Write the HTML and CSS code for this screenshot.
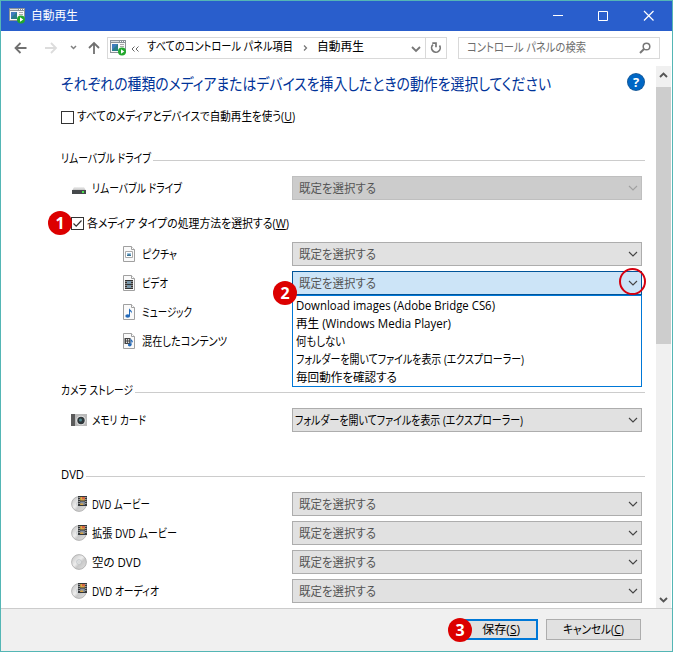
FILE: index.html
```html
<!DOCTYPE html>
<html lang="ja">
<head>
<meta charset="utf-8">
<title>自動再生</title>
<link rel="stylesheet" href="styles.css">
</head>
<body>
<svg class="defs" width="0" height="0">
  <defs>
    <linearGradient id="silver" x1="0" y1="0" x2="1" y2="1"><stop offset="0" stop-color="#bfbfbf"/><stop offset=".45" stop-color="#eeeeee"/><stop offset=".6" stop-color="#c9c9c9"/><stop offset="1" stop-color="#e2e2e2"/></linearGradient>
    <linearGradient id="drive" x1="0" y1="0" x2="0" y2="1"><stop offset="0" stop-color="#f1f1f1"/><stop offset="1" stop-color="#b5b5b5"/></linearGradient>
    <symbol id="app" viewBox="0 0 16 16">
      <path d="M0 0h16v13H0z" fill="#8b9298"/><path d="M1 3h14v9H1z" fill="#f8f8f8"/>
      <path d="M1 1h8v1H1z" fill="#d9dde0"/><path d="M10 1h1v1h-1zM12 1h1v1h-1zM14 1h1v1h-1z" fill="#fff"/>
      <path d="M2 4h6v7H2z" fill="#287d88"/><path d="M2 4h6L2 10z" fill="#407dbd"/><path d="M10 4h4v1h-4zM10 6h4v1h-4z" fill="#aaa"/>
      <circle cx="12" cy="11.500" r="4" fill="#22a82d"/><path d="M11 9.200v4.600l3.300-2.300z" fill="#fff"/>
    </symbol>
    <symbol id="page" viewBox="0 0 12 16"><path d="M.5.5h8l3 3v12H.5z" fill="#fafafa" stroke="#a0a0a0"/><path d="M8.500.5v3h3" fill="#fff" stroke="#a0a0a0"/></symbol>
    <symbol id="disc" viewBox="0 0 16 16"><circle cx="8" cy="8" r="7.400" fill="url(#silver)" stroke="#a9a9a9" stroke-width=".8"/><circle cx="8" cy="8" r="2.400" fill="#e7eaeb" stroke="#b8bcbe" stroke-width=".7"/><circle cx="8" cy="8" r=".9" fill="#fff" stroke="#aaa" stroke-width=".4"/></symbol>
    <symbol id="film" viewBox="0 0 9 10"><path d="M0 0h9v10H0z" fill="#35383a"/><path d="M2.200 1h4.600v3.500H2.200z" fill="#dcab42"/><path d="M4 1h2.800v2.200H4z" fill="#d46147"/><path d="M2.200 5.500h4.600V9H2.200z" fill="#8791a0"/><path d="M2.200 7.500h3V9h-3z" fill="#d8a441"/><path d="M.6 1h1v1h-1zM.6 3h1v1h-1zM.6 5h1v1h-1zM.6 7h1v1h-1zM7.400 1h1v1h-1zM7.400 3h1v1h-1zM7.400 5h1v1h-1zM7.400 7h1v1h-1z" fill="#ddd"/></symbol>
    <symbol id="movie" viewBox="0 0 16 16"><use href="#disc" width="16" height="16"/><use href="#film" x="7" y="0" width="9" height="10"/></symbol>
    <symbol id="chev" viewBox="0 0 10 6"><path d="M1 1l4 4 4-4" fill="none" stroke="currentColor" stroke-width="1.100"/></symbol>
  </defs>
</svg>
<div class="window">
  <header class="titlebar">
    <svg class="i16"><use href="#app"/></svg>
    <span class="caption" data-w="47">自動再生</span>
    <svg class="winbtns" width="105" height="12" viewBox="0 0 105 12" fill="none" stroke="#fff"><path d="M1 5.500h10M46.500 1.500h9v9h-9z"/><path d="M92 1l9.500 9.500M101.500 1L92 10.500" stroke-width="1.200"/></svg>
  </header>
  <nav class="nav">
    <svg class="arrows" width="90" height="14" viewBox="0 0 90 14" fill="none" stroke-width="1.800">
      <path d="M12.500 7H2M6.500 2L1.500 7l5 5" stroke="#707070"/>
      <path d="M31 7h10.500M37 2l5 5-5 5" stroke="#dcdcdc"/>
      <path d="M57 5l2.500 2.500L62 5" stroke="#808080" stroke-width="1.500"/>
      <path d="M80 13V2M75 7l5-5 5 5" stroke="#707070"/>
    </svg>
    <div class="address">
      <svg class="i16"><use href="#app"/></svg>
      <svg class="dbl" width="8" height="6" viewBox="0 0 8 6" fill="none" stroke="#666"><path d="M3.500.500L1 3l2.500 2.500M7.500.500L5 3l2.500 2.500"/></svg>
      <span class="crumb" data-w="146">すべてのコントロール パネル項目</span>
      <svg class="sep" width="5" height="8" viewBox="0 0 5 8" fill="none" stroke="#777" stroke-width="1.300"><path d="M1 1.500L3.500 4 1 6.500"/></svg>
      <span data-w="47">自動再生</span>
      <svg class="drop" width="10" height="7" viewBox="0 0 10 7" fill="none" stroke="#777" stroke-width="1.800"><path d="M1 1l4 4 4-4"/></svg>
      <span class="refresh"><svg width="12" height="12" viewBox="0 0 12 12" fill="none" stroke="#777" stroke-width="1.700"><path d="M3 2.700A4.300 4.300 0 1 0 9.500 3.500"/><path d="M2.300 1.200H6v4"/></svg></span>
    </div>
    <div class="search">
      <span data-w="119">コントロール パネルの検索</span>
      <svg width="12" height="12" viewBox="0 0 12 12" fill="none" stroke="#777" stroke-width="1.500"><circle cx="7.500" cy="4.500" r="3.300"/><path d="M5 7L1 11" stroke-width="2"/></svg>
    </div>
  </nav>
  <div class="body">
    <main>
      <div class="headline"><h1 data-w="490">それぞれの種類のメディアまたはデバイスを挿入したときの動作を選択してください</h1>
        <span class="help">?</span></div>
      <label class="check all"><i class="box"></i><span data-w="218">すべてのメディアとデバイスで自動再生を使う(<u>U</u>)</span></label>

      <section class="removable">
        <h2><span data-w="90">リムーバブル ドライブ</span></h2>
        <div class="row"><svg class="i16" viewBox="0 0 16 16"><path d="M3 7h10l2 4H1z" fill="url(#drive)"/><path d="M1 10h14v4H1z" fill="#45494b"/><path d="M11 11h2v2h-2z" fill="#4be34d"/></svg><span data-w="90">リムーバブル ドライブ</span>
          <div class="select disabled"><span data-w="77">既定を選択する</span><svg class="chev"><use href="#chev"/></svg></div></div>
        <label class="check each"><b class="badge one">1</b><i class="box"><svg width="11" height="11" viewBox="0 0 11 11" fill="none" stroke="#333" stroke-width="1.200"><path d="M1.500 5.500l2.700 2.700L9.500 2.500"/></svg></i><span data-w="202">各メディア タイプの処理方法を選択する(<u>W</u>)</span></label>
        <div class="media">
          <div class="row"><svg class="pg" viewBox="0 0 12 16"><use href="#page"/><path d="M2.500 5.500h7v6h-7z" fill="#fff" stroke="#aaa"/><path d="M4 7h4v3H4z" fill="#9fc4e2"/><path d="M4 9l2-1 2 1v1H4z" fill="#397292"/></svg><span data-w="35">ピクチャ</span>
            <div class="select"><span data-w="77">既定を選択する</span><svg class="chev"><use href="#chev"/></svg></div></div>
          <div class="row"><svg class="pg" viewBox="0 0 12 16"><use href="#page"/><path d="M2 5h8v9H2z" fill="#333"/><path d="M4 6h4v3H4zM4 10h4v3H4z" fill="#7796a9"/><path d="M2.500 6h1v1h-1zM2.500 8h1v1h-1zM2.500 10h1v1h-1zM2.500 12h1v1h-1zM8.500 6h1v1h-1zM8.500 8h1v1h-1zM8.500 10h1v1h-1zM8.500 12h1v1h-1z" fill="#ddd"/></svg><span data-w="26">ビデオ</span>
            <div class="select active"><b class="badge two">2</b><span data-w="77">既定を選択する</span><svg class="chev"><use href="#chev"/></svg><i class="ring"></i>
              <ul class="popup">
                <li><span data-w="199">Download images (Adobe Bridge CS6)</span></li>
                <li><span data-w="155">再生 (Windows Media Player)</span></li>
                <li><span data-w="49">何もしない</span></li>
                <li><span data-w="228">フォルダーを開いてファイルを表示 (エクスプローラー)</span></li>
                <li><span data-w="101">毎回動作を確認する</span></li>
              </ul></div></div>
          <div class="row"><svg class="pg" viewBox="0 0 12 16"><use href="#page"/><ellipse cx="4.700" cy="12" rx="2.400" ry="1.800" fill="#2369b8"/><path d="M6 12V4c.5 2 3.500 2 3 5.500C8.500 8 7.500 7.500 7 7.500V12z" fill="#2369b8"/></svg><span data-w="50">ミュージック</span></div>
          <div class="row"><svg class="pg" viewBox="0 0 12 16"><use href="#page"/><path d="M1.500 5h6v6h-6z" fill="#444"/><path d="M3 6h1.200v1.500H3zM5 6h1.200v1.500H5zM3 8.500h1.200V10H3zM5 8.500h1.200V10H5z" fill="#ddd"/><ellipse cx="6.700" cy="12" rx="1.800" ry="1.400" fill="#2369b8"/><path d="M7.500 12V5c.5 2 3 2 2.500 5-.5-1.300-1-1.500-1.500-1.500V12z" fill="#2369b8"/></svg><span data-w="85">混在したコンテンツ</span></div>
        </div>
      </section>

      <section class="camera">
        <h2><span data-w="72">カメラ ストレージ</span></h2>
        <div class="row"><svg class="i16" viewBox="0 0 16 16"><path d="M0 2h16v12H0z" fill="#b9b9b9"/><path d="M0 2h4v12H0z" fill="#5b5b5b"/><circle cx="10" cy="8.500" r="4.800" fill="#e3e3e3"/><circle cx="10" cy="8.500" r="3.700" fill="#30383b"/><circle cx="9.500" cy="8" r="1.500" fill="#4e8a92"/></svg><span data-w="54">メモリ カード</span>
          <div class="select chosen"><span data-w="228">フォルダーを開いてファイルを表示 (エクスプローラー)</span><svg class="chev"><use href="#chev"/></svg></div></div>
      </section>

      <section class="dvd">
        <h2><span data-w="23">DVD</span></h2>
        <div class="row"><svg class="i16"><use href="#movie"/></svg><span data-w="58">DVD ムービー</span><div class="select"><span data-w="77">既定を選択する</span><svg class="chev"><use href="#chev"/></svg></div></div>
        <div class="row"><svg class="i16"><use href="#movie"/></svg><span data-w="85">拡張 DVD ムービー</span><div class="select"><span data-w="77">既定を選択する</span><svg class="chev"><use href="#chev"/></svg></div></div>
        <div class="row"><svg class="i16"><use href="#disc"/></svg><span data-w="49">空の DVD</span><div class="select"><span data-w="77">既定を選択する</span><svg class="chev"><use href="#chev"/></svg></div></div>
        <div class="row"><svg class="i16"><use href="#movie"/></svg><span data-w="67">DVD オーディオ</span><div class="select"><span data-w="77">既定を選択する</span><svg class="chev"><use href="#chev"/></svg></div></div>
      </section>
    </main>
    <aside class="scroll">
      <svg width="9" height="6" viewBox="0 0 9 6" fill="none" stroke="#555" stroke-width="1.900"><path d="M1 5l3.500-3.500L8 5"/></svg>
      <div class="thumb"></div>
      <svg class="down" width="9" height="6" viewBox="0 0 9 6" fill="none" stroke="#555" stroke-width="1.900"><path d="M1 1l3.500 3.500L8 1"/></svg>
    </aside>
  </div>
  <footer>
    <button class="save"><b class="badge three">3</b><span data-w="38">保存(<u>S</u>)</span></button>
    <button><span data-w="61">キャンセル(<u>C</u>)</span></button>
  </footer>
</div>
<script src="fit.js"></script>
</body>
</html>
```
FILE: styles.css
```css
* { box-sizing: border-box; }
body { margin: 0; font: 12px/18px "Open Sans", "Noto Sans CJK JP", sans-serif; color: #000; font-feature-settings: "palt"; }
.defs { position: absolute; }
svg { flex: none; display: block; }
[data-w] { display: block; flex: none; white-space: pre; transform-origin: 0 50%; }
u { text-underline-offset: 1px; }
.i16 { width: 16px; height: 16px; }
.window { width: 673px; height: 652px; border: 1px solid #54b6b5; display: flex; flex-direction: column; background: #fff; overflow: hidden; }

.titlebar { height: 30px; flex: none; background: #295ecc; color: #fff; display: flex; align-items: center; padding: 0 15px 0 8px; }
.titlebar .caption { margin-left: 6px; }
.winbtns { margin-left: auto; margin-top: -1px; }

.nav { height: 33px; flex: none; display: flex; align-items: flex-start; padding: 6px 0 0 13px; }
.arrows { margin-top: 4px; }
.address { width: 340px; height: 22px; margin-left: 3px; border: 1px solid #d9d9d9; display: flex; align-items: center; padding-left: 2px; }
.address .dbl { margin: 2px 8px 0 5px; }
.address span { margin-top: -2px; }
.address .sep { margin: 0 9px 0 10px; }
.address .drop { margin: 2px 0 0 auto; }
.address .refresh { width: 21px; height: 20px; margin: 0 0 0 4px; border-left: 1px solid #d9d9d9; display: grid; place-items: center; }
.search { width: 202px; height: 22px; margin-left: 11px; border: 1px solid #d9d9d9; display: flex; align-items: center; justify-content: space-between; padding: 0 8px; color: #6d6d6d; }

.body { height: 544px; flex: none; display: flex; justify-content: space-between; padding-right: 1px; }
main { width: 644px; padding: 8px 0 0 60px; }
.headline { height: 24px; display: flex; align-items: center; justify-content: space-between; }
h1 { margin: 0; font-size: 16px; line-height: 24px; font-weight: 400; color: #003399; }
.help { width: 16px; height: 16px; margin: -4px 1px 0 0; border-radius: 50%; background: #0067c5; color: #fff; font-weight: 700; font-size: 13px; line-height: 16px; text-align: center; box-shadow: 0 0 0 1px #165a9a; }
.check { position: relative; display: flex; align-items: center; height: 20px; }
.check.all { margin-top: 11px; }
.check.each { margin: 13px 0 9px 10px; }
.check.each [data-w] { margin-top: 2px; }
.box { width: 13px; height: 13px; flex: none; border: 1px solid #333; background: #fff; margin-right: 3px; }
h2 { display: flex; align-items: center; height: 20px; margin: 0 0 7px; font-size: 12px; font-weight: 400; line-height: 18px; }
h2::after { content: ""; flex: 1; height: 1px; margin: 3px 0 0 2px; background: #ccc; }
section.removable { margin-top: 22px; }
section.camera { margin-top: 28px; }
section.dvd { margin-top: 33px; }
.row { height: 24px; display: flex; align-items: center; padding-left: 10px; margin-right: 3px; }
.row + .row { margin-top: 5px; }
.row > [data-w] { margin-left: 5px; margin-top: 1px; }
.media .row { padding-left: 62px; }
.media .row > [data-w] { margin-left: 7px; }
.pg { width: 12px; height: 16px; }
.select { position: relative; width: 350px; height: 24px; flex: none; margin-left: auto; border: 1px solid #adadad; background: #e1e1e1; color: #555; display: flex; align-items: center; padding: 0 3px 0 6px; }
.select > [data-w] { margin-top: 2px; }
.select.disabled { background: #ccc; border-color: #bfbfbf; }
.select.disabled .chev { color: #a0a0a0; }
.select.chosen { color: #000; padding-left: 2px; }
.select.active { background: #cce4f7; border-color: #005499; }
.chev { width: 10px; height: 6px; margin-left: auto; color: #444; }
.popup { position: absolute; z-index: 1; left: -1px; top: 23px; width: 350px; height: 92px; margin: 0; padding: 1px 3px; border: 1px solid #0078d7; background: #fff; color: #000; list-style: none; }
.popup li { height: 18px; }
.ring { position: absolute; z-index: 2; right: -5px; top: -4px; width: 27px; height: 27px; border: 2px solid #d5000f; border-radius: 50%; }
.badge { position: absolute; z-index: 3; width: 24px; height: 24px; border-radius: 50%; background: #dc0000; color: #fff; font: 700 16px/24px "Open Sans", sans-serif; text-align: center; }
.one { left: -23px; top: -2px; }
.two { left: -20px; top: 9px; }
.three { left: -13px; top: -3px; }

.scroll { width: 15px; height: 542px; margin-top: 2px; background: #f0f0f0; display: flex; flex-direction: column; align-items: center; padding-top: 6px; }
.thumb { width: 15px; height: 257px; margin-top: 9px; background: #cdcdcd; flex: none; }
.scroll .down { margin: auto 0 5px; }

footer { flex: 1; border-top: 1px solid #ccc; background: #f0f0f0; display: flex; justify-content: flex-end; gap: 8px; padding: 10px 31px 0 0; }
button { position: relative; width: 95px; height: 21px; padding: 0; border: 1px solid #adadad; background: #e1e1e1; color: #000; font: inherit; font-feature-settings: inherit; display: flex; align-items: center; justify-content: center; }
.save { width: 79px; border: 2px solid #0078d7; padding-left: 4px; }
```
FILE: fit.js
```js
document.querySelectorAll("[data-w]").forEach(function (el) {
  var range = document.createRange();
  range.selectNodeContents(el);
  var natural = range.getBoundingClientRect().width;
  var target = Number(el.dataset.w);
  el.style.width = target + "px";
  el.style.transform = "scaleX(" + target / natural + ")";
});
```
